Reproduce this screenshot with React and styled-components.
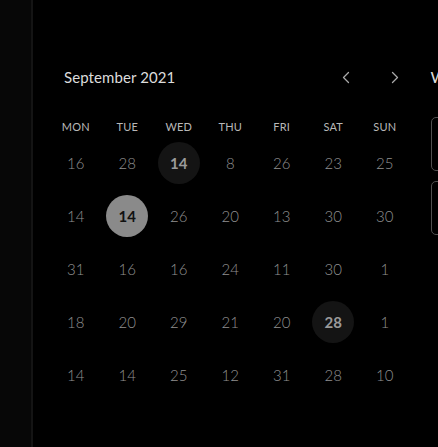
import React from "react";
import styled, { createGlobalStyle } from "styled-components";

const GlobalStyle = createGlobalStyle`
    html, body {
        margin: 0;
        padding: 0;
        background: #000;
    }
    body {
        font-family: Lato, "Open Sans", "Liberation Sans", sans-serif;
        overflow: hidden;
    }
`;

const Page = styled.div`
    width: 438px;
    height: 447px;
    display: flex;
    background: #000;
    overflow: hidden;
`;

const Sidebar = styled.aside`
    flex: 0 0 31px;
    background: #070707;
    border-right: 2px solid #141414;
`;

const CalendarPanel = styled.section`
    flex: 0 0 360px;
    padding: 67px 0 0 17px;
`;

const Header = styled.div`
    display: flex;
    align-items: center;
    justify-content: space-between;
    height: 20px;
    padding: 0 10px 0 14px;
`;

const Title = styled.h2`
    margin: 0;
    font-size: 15px;
    font-weight: 400;
    color: #dcdcdc;
    letter-spacing: 0.1px;
`;

const Arrows = styled.div`
    display: flex;
    gap: 37px;
`;

const ArrowButton = styled.button`
    width: 12px;
    height: 16px;
    padding: 0;
    border: none;
    background: none;
    color: #aaa;
    display: flex;
    align-items: center;
    justify-content: center;
    cursor: pointer;
`;

const Grid = styled.div`
    display: grid;
    grid-template-columns: repeat(7, 51.5px);
`;

const WeekRow = styled(Grid)`
    margin-top: 31px;
    height: 17px;
    align-items: center;
`;

const WeekDay = styled.span`
    text-align: center;
    font-size: 11px;
    color: #b8b8b8;
    letter-spacing: 0.2px;
`;

const Days = styled(Grid)`
    grid-auto-rows: 53px;
    margin-top: 1px;
`;

const Cell = styled.div`
    display: flex;
    align-items: center;
    justify-content: center;
`;

const Day = styled.span`
    width: 42px;
    height: 42px;
    border-radius: 50%;
    display: flex;
    align-items: center;
    justify-content: center;
    font-size: 15px;
    font-weight: ${(p) => (p.$state ? 700 : 300)};
    color: ${(p) =>
        p.$state === "selected" ? "#111" : p.$state === "marked" ? "#9a9a9a" : "#909090"};
    background: ${(p) =>
        p.$state === "selected" ? "#8a8a8a" : p.$state === "marked" ? "#141414" : "transparent"};
`;

const SidePanel = styled.section`
    flex: 1;
    padding: 67px 0 0 20px;
    min-width: 0;
`;

const SideTitle = styled.h3`
    margin: 0;
    height: 20px;
    line-height: 20px;
    font-size: 16px;
    font-weight: 400;
    color: #dcdcdc;
    white-space: nowrap;
`;

const Slots = styled.div`
    margin-top: 30px;
    display: flex;
    flex-direction: column;
    gap: 10px;
`;

const Slot = styled.div`
    width: 160px;
    height: 52px;
    border: 1px solid #4f4f4f;
    border-radius: 5px;
`;

const weekDays = ["MON", "TUE", "WED", "THU", "FRI", "SAT", "SUN"];

const rows = [
    [16, 28, [14, "marked"], 8, 26, 23, 25],
    [14, [14, "selected"], 26, 20, 13, 30, 30],
    [31, 16, 16, 24, 11, 30, 1],
    [18, 20, 29, 21, 20, [28, "marked"], 1],
    [14, 14, 25, 12, 31, 28, 10],
];

const Chevron = ({ dir }) => (
    <svg width="8" height="13" viewBox="0 0 8 13" fill="none">
        <path
            d={dir === "left" ? "M6.5 1.5 L1.5 6.5 L6.5 11.5" : "M1.5 1.5 L6.5 6.5 L1.5 11.5"}
            stroke="currentColor"
            strokeWidth="1.3"
            strokeLinecap="round"
            strokeLinejoin="round"
        />
    </svg>
);

const App = () => (
    <Page>
        <GlobalStyle />
        <Sidebar />
        <CalendarPanel>
            <Header>
                <Title>September 2021</Title>
                <Arrows>
                    <ArrowButton aria-label="Previous month">
                        <Chevron dir="left" />
                    </ArrowButton>
                    <ArrowButton aria-label="Next month">
                        <Chevron dir="right" />
                    </ArrowButton>
                </Arrows>
            </Header>
            <WeekRow>
                {weekDays.map((d) => (
                    <WeekDay key={d}>{d}</WeekDay>
                ))}
            </WeekRow>
            <Days>
                {rows.map((row, r) =>
                    row.map((item, c) => {
                        const [num, state] = Array.isArray(item) ? item : [item, null];
                        return (
                            <Cell key={`${r}-${c}`}>
                                <Day $state={state}>{num}</Day>
                            </Cell>
                        );
                    })
                )}
            </Days>
        </CalendarPanel>
        <SidePanel>
            <SideTitle>Wednesday</SideTitle>
            <Slots>
                <Slot />
                <Slot />
            </Slots>
        </SidePanel>
    </Page>
);

export default App;
